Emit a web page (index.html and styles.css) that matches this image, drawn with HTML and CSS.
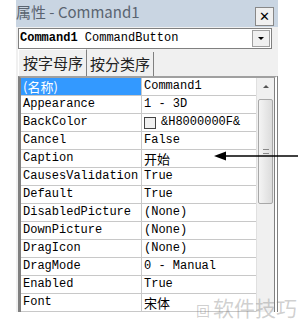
FILE: index.html
```html
<!DOCTYPE html>
<html lang="zh">
<head>
    <meta charset="UTF-8">
    <title>属性 - Command1</title>
    <link rel="stylesheet" href="styles.css">
</head>
<body>

<div class="win">
    <div class="titlebar">
        <span class="title">属性 - Command1</span>
        <span class="close">✕</span>
    </div>

    <div class="objsel">
        <div class="combo">
            <b>Command1</b> CommandButton
        </div>
        <div class="dropbtn"><span class="tri-down"></span></div>
    </div>

    <div class="tabs">
        <div class="tab active">按字母序</div>
        <div class="tab">按分类序</div>
    </div>

    <div class="gridwrap">
        <div class="grid">
            <div class="row sel"><div class="name">(名称)</div><div class="val">Command1</div></div>
            <div class="row"><div class="name">Appearance</div><div class="val">1 - 3D</div></div>
            <div class="row"><div class="name">BackColor</div><div class="val"><span class="swatch"></span>&amp;H8000000F&amp;</div></div>
            <div class="row"><div class="name">Cancel</div><div class="val">False</div></div>
            <div class="row"><div class="name">Caption</div><div class="val cjk">开始</div></div>
            <div class="row"><div class="name">CausesValidation</div><div class="val">True</div></div>
            <div class="row"><div class="name">Default</div><div class="val">True</div></div>
            <div class="row"><div class="name">DisabledPicture</div><div class="val">(None)</div></div>
            <div class="row"><div class="name">DownPicture</div><div class="val">(None)</div></div>
            <div class="row"><div class="name">DragIcon</div><div class="val">(None)</div></div>
            <div class="row"><div class="name">DragMode</div><div class="val">0 - Manual</div></div>
            <div class="row"><div class="name">Enabled</div><div class="val">True</div></div>
            <div class="row"><div class="name">Font</div><div class="val cjk">宋体</div></div>
        </div>
        <div class="scrollbar">
            <div class="sb-arrow"><span class="tri-up"></span></div>
            <div class="thumb"><span class="grip"></span></div>
        </div>
    </div>
</div>

<!-- 説明用の矢印 -->
<svg class="pointer" width="84" height="10" viewBox="0 0 84 10">
    <path d="M84 5 H10" stroke="#000" stroke-width="1.5"/>
    <path d="M0 5 L12 0.5 L12 9.5 Z" fill="#000"/>
</svg>

<div class="watermark"><span class="wm-icon">回</span>软件技巧</div>

</body>
</html>
```

FILE: styles.css
```css
body {
    margin: 0;
    background-color: #fff;
    font-family: "Liberation Mono", "Noto Sans CJK SC", monospace;
    font-size: 12px;
    color: #000;
}

.win {
    margin-left: 16px;
    width: 262px;
    background-color: #f0f0f0;
}

.titlebar {
    height: 27px;
    display: flex;
    align-items: center;
    justify-content: space-between;
    background-color: #c9d5e2;
}
.title {
    font-family: "Noto Sans CJK SC", sans-serif;
    font-size: 15px;
    line-height: 22px;
    margin-top: -3px;
    color: #5a6470;
}
.close {
    width: 17px;
    height: 17px;
    margin-right: 4px;
    margin-top: 6px;
    background-color: #f0f0f0;
    border: 1px solid #888;
    font-family: "DejaVu Sans", sans-serif;
    font-weight: bold;
    font-size: 13px;
    line-height: 17px;
    text-align: center;
}

.objsel {
    display: flex;
    height: 19px;
    margin: 1px 6px 0 2px;
    border: 1px solid #808080;
    background-color: #fff;
}
.combo {
    flex: 1;
    padding-left: 1px;
    line-height: 18px;
    font-family: "Liberation Mono", monospace;
    font-size: 12px;
}
.dropbtn {
    width: 16px;
    margin: 1px;
    background-color: #f0f0f0;
    border: 1px solid #a0a0a0;
    display: flex;
    align-items: center;
    justify-content: center;
}
.tri-down {
    border-left: 3px solid transparent;
    border-right: 3px solid transparent;
    border-top: 3px solid #000;
}

.tabs {
    display: flex;
    height: 27px;
    padding-left: 2px;
    align-items: flex-end;
}
.tab {
    font-family: "Noto Sans CJK SC", sans-serif;
    font-size: 15px;
    height: 24px;
    line-height: 24px;
    padding: 0 3px;
    border-right: 1px solid #808080;
    color: #222;
}
.tab.active {
    height: 26px;
    line-height: 26px;
    padding-left: 4px;
    border-left: 1px solid #fff;
    border-top: 1px solid #fff;
}

.gridwrap {
    display: flex;
    margin-left: 2px;
    border-left: 3px solid #808080;
    border-top: 2px solid #a0a0a0;
    border-right: 4px double #808080;
    background-color: #fff;
}
.grid {
    flex: 1;
}
.row {
    display: flex;
    height: 17px;
    line-height: 17px;
    border-bottom: 1px solid #c8c8c8;
}
.name {
    width: 118px;
    padding-left: 2px;
    border-right: 1px solid #c8c8c8;
    white-space: nowrap;
    overflow: hidden;
}
.val {
    flex: 1;
    padding-left: 2px;
    white-space: nowrap;
    display: flex;
    align-items: center;
}
.row.sel .name {
    background-color: #3399ff;
    color: #fff;
    font-family: "Noto Sans CJK SC", sans-serif;
    font-size: 13px;
    line-height: 17px;
}
.cjk {
    font-family: "Noto Sans CJK SC", sans-serif;
    font-size: 13px;
    line-height: 17px;
}
.swatch {
    display: inline-block;
    width: 10px;
    height: 10px;
    border: 1px solid #444;
    background-color: #f0f0f0;
    margin-right: 5px;
}

.scrollbar {
    width: 17px;
    background-color: #f0f0f0;
    border-left: 1px solid #e0e0e0;
}
.sb-arrow {
    height: 17px;
    display: flex;
    align-items: center;
    justify-content: center;
}
.tri-up {
    border-left: 3px solid transparent;
    border-right: 3px solid transparent;
    border-bottom: 3px solid #555;
}
.thumb {
    margin: 4px 1px;
    height: 103px;
    background: linear-gradient(to right, #f4f4f4, #dcdcdc);
    border: 1px solid #a8a8a8;
    border-radius: 2px;
    display: flex;
    align-items: center;
    justify-content: center;
}
.grip {
    width: 6px;
    height: 5px;
    border-top: 1px solid #888;
    border-bottom: 1px solid #888;
    box-sizing: border-box;
}

.pointer {
    position: absolute;
    left: 214px;
    top: 151px;
}

.watermark {
    position: absolute;
    left: 196px;
    top: 292px;
    font-family: "Noto Sans CJK SC", sans-serif;
    font-size: 21px;
    color: rgba(120, 120, 120, 0.35);
}
.wm-icon {
    font-size: 14px;
    margin-right: 3px;
}
```
